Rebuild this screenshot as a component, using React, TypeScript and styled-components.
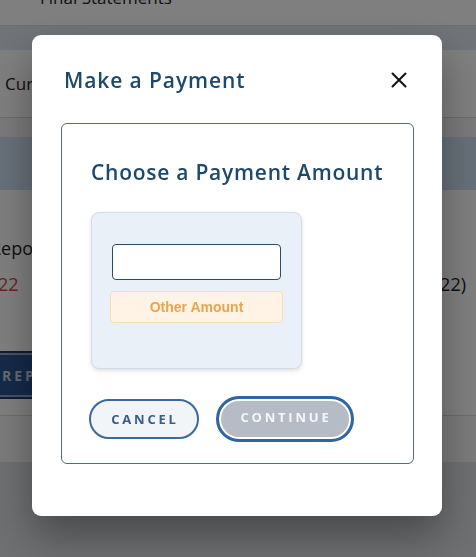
import styled, { createGlobalStyle } from "styled-components";

const GlobalStyle = createGlobalStyle`
  html, body {
    margin: 0;
    padding: 0;
    height: 100%;
    overflow: hidden;
    background: #dde0e4;
    font-family: "Open Sans", "Liberation Sans", sans-serif;
  }
`;

// the page behind the dialog, scrolled a little
const Page = styled.div`
  margin-top: -30px;
  background: #ffffff;
`;

const PageRow = styled.div<{ $height: number; $bg?: string; $line?: boolean }>`
  height: ${({ $height }) => $height}px;
  background: ${({ $bg }) => $bg ?? "#ffffff"};
  border-bottom: ${({ $line }) => ($line ? "1px solid #d8d8d8" : "none")};
  display: flex;
  align-items: center;
  justify-content: space-between;
  font-size: 17px;
  color: #222;
`;

const RowText = styled.span<{ $indent?: number; $color?: string }>`
  margin-left: ${({ $indent }) => $indent ?? 5}px;
  color: ${({ $color }) => $color ?? "#222"};
  white-space: nowrap;
`;

const Report = styled.div`
  background: #ffffff;
  padding: 40px 10px 16px 0;
  border-bottom: 1px solid #d8d8d8;
  display: flex;
  flex-direction: column;
`;

const ReportLine = styled.div`
  display: flex;
  justify-content: space-between;
  font-size: 18px;
  height: 36px;
  align-items: center;
`;

const ReportButton = styled.div`
  margin-top: 49px;
  margin-left: -10px;
  width: 200px;
  height: 44px;
  background: #2a5590;
  border: 2px solid #1c3c6a;
  box-shadow: inset 0 0 0 2px #8fa8c8;
  display: flex;
  align-items: center;
  padding-left: 10px;
  color: #c9d4e4;
  font-weight: 700;
  font-size: 14px;
  letter-spacing: 3px;
`;

const Overlay = styled.div`
  position: fixed;
  inset: 0;
  background: rgba(0, 0, 0, 0.5);
  display: flex;
  align-items: flex-start;
  padding: 35px 0 0 32px;
`;

const Modal = styled.div`
  width: 410px;
  height: 481px;
  box-sizing: border-box;
  background: #ffffff;
  border-radius: 9px;
  box-shadow: 0 20px 40px rgba(0, 0, 0, 0.35);
  padding: 27px 28px 0 29px;
`;

const ModalHeader = styled.div`
  display: flex;
  justify-content: space-between;
  align-items: center;
  padding-left: 3px;
  padding-right: 6px;
  height: 36px;
`;

const Title = styled.h2`
  margin: 0;
  font-size: 21px;
  font-weight: 600;
  letter-spacing: 0.9px;
  color: #1d4a6c;
`;

const CloseButton = styled.button`
  border: none;
  background: none;
  padding: 0;
  width: 18px;
  height: 18px;
  display: grid;
  place-items: center;
  cursor: pointer;
`;

const Card = styled.div`
  margin-top: 25px;
  border: 1px solid #4d6d88;
  border-radius: 6px;
  padding: 35px 20px 21px 29px;
`;

const CardTitle = styled.h3`
  margin: 0;
  font-size: 21px;
  font-weight: 600;
  letter-spacing: 0.75px;
  color: #1d4a6c;
  line-height: 26px;
  white-space: nowrap;
`;

const AmountBox = styled.div`
  margin-top: 27px;
  width: 211px;
  box-sizing: border-box;
  background: #eaf0f7;
  border: 1px solid #d4dce6;
  border-radius: 8px;
  box-shadow: 0 2px 4px rgba(0, 0, 0, 0.12);
  padding: 31px 18px 45px 18px;
  display: flex;
  flex-direction: column;
  align-items: center;
  gap: 11px;
`;

const AmountInput = styled.input`
  width: 169px;
  height: 36px;
  box-sizing: border-box;
  border: 1px solid #2c4b68;
  border-radius: 4px;
  background: #ffffff;
  outline: none;
`;

const OtherButton = styled.button`
  width: 173px;
  height: 32px;
  border: 1px solid #f7dcb8;
  border-radius: 4px;
  background: #fef3e5;
  color: #e8a64c;
  font-family: "Liberation Sans", Arial, sans-serif;
  font-weight: 700;
  font-size: 14px;
`;

const Actions = styled.div`
  margin-top: 27px;
  display: flex;
  align-items: center;
  gap: 17px;
  margin-left: -2px;
`;

const PillButton = styled.button<{ $primary?: boolean }>`
  box-sizing: border-box;
  font-family: "Open Sans", sans-serif;
  font-weight: 700;
  font-size: 13px;
  letter-spacing: 2.8px;
  border-radius: 999px;
  cursor: pointer;
  width: ${({ $primary }) => ($primary ? 138 : 110)}px;
  height: ${({ $primary }) => ($primary ? 46 : 40)}px;
  border: ${({ $primary }) => ($primary ? "3px solid #2d66a3" : "2px solid #3a69a0")};
  background: ${({ $primary }) => ($primary ? "#b6bcc5" : "#f2f5f8")};
  color: ${({ $primary }) => ($primary ? "#f4f6f8" : "#3b5c88")};
  box-shadow: ${({ $primary }) => ($primary ? "inset 0 0 0 2px #ffffff" : "none")};
  padding: 0 0 ${({ $primary }) => ($primary ? 4 : 0)}px 2px;
`;

export default function App() {
  return (
    <>
      <GlobalStyle />
      <Page>
        <PageRow $height={55} $line>
          <RowText $indent={40}>Final Statements</RowText>
        </PageRow>
        <PageRow $height={24} $bg="#e0e8f0" />
        <PageRow $height={67} $line>
          <RowText>Current Statement</RowText>
        </PageRow>
        <PageRow $height={19} $bg="#f5f5f5" />
        <PageRow $height={53} $bg="#cfe0f3" />
        <Report>
          <ReportLine>
            <RowText $indent={-10}>Repost</RowText>
          </ReportLine>
          <ReportLine>
            <RowText $indent={-2} $color="#d24a40">22</RowText>
            <RowText>(22)</RowText>
          </ReportLine>
          <ReportButton>REPOST</ReportButton>
        </Report>
        <PageRow $height={46} $bg="#f7f7f7" />
      </Page>
      <Overlay>
        <Modal role="dialog" aria-label="Make a Payment">
          <ModalHeader>
            <Title>Make a Payment</Title>
            <CloseButton aria-label="Close">
              <svg width="16" height="16" viewBox="0 0 16 16">
                <path d="M1.5 1.5 L14.5 14.5 M14.5 1.5 L1.5 14.5" stroke="#111" strokeWidth="2" strokeLinecap="round" />
              </svg>
            </CloseButton>
          </ModalHeader>
          <Card>
            <CardTitle>Choose a Payment Amount</CardTitle>
            <AmountBox>
              <AmountInput />
              <OtherButton>Other Amount</OtherButton>
            </AmountBox>
            <Actions>
              <PillButton>CANCEL</PillButton>
              <PillButton $primary>CONTINUE</PillButton>
            </Actions>
          </Card>
        </Modal>
      </Overlay>
    </>
  );
}
